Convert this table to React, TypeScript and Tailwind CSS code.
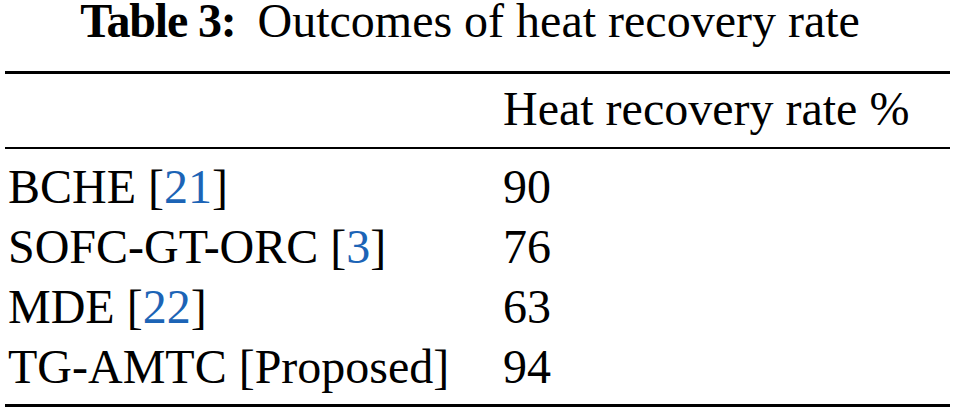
import React from "react";

const rows = [
  { name: "BCHE", ref: "21", value: "90" },
  { name: "SOFC-GT-ORC", ref: "3", value: "76" },
  { name: "MDE", ref: "22", value: "63" },
  { name: "TG-AMTC", ref: null, value: "94" },
];

const App = () => {
  return (
    <div className="w-[954px] h-[412px] bg-white text-black font-[family-name:'Liberation_Serif',serif] text-[48px]">
      <h1 className="m-0 text-center leading-[42px] font-normal pr-[14px]">
        <span className="font-bold tracking-[-1.2px]">Table 3:</span>
        <span className="ml-[22px]">Outcomes of heat recovery rate</span>
      </h1>
      <div className="mx-[5px] mt-[29px] w-[945px]">
        <div className="border-t-[3px] border-black" />
        <div className="grid grid-cols-[498px_1fr] leading-[60px] pt-[5px] pb-[8px]">
          <div />
          <div>Heat recovery rate %</div>
        </div>
        <div className="border-t-2 border-black" />
        <div className="pt-[8px] pb-[7px]">
          {rows.map((r) => (
            <div key={r.name} className="grid grid-cols-[498px_1fr] leading-[60px]">
              <div className="pl-[3px]">
                {r.name}{" "}
                {r.ref ? (
                  <>
                    [<span className="text-[#1c64b6]">{r.ref}</span>]
                  </>
                ) : (
                  "[Proposed]"
                )}
              </div>
              <div>{r.value}</div>
            </div>
          ))}
        </div>
        <div className="border-t-[3px] border-black" />
      </div>
    </div>
  );
};

export default App;
